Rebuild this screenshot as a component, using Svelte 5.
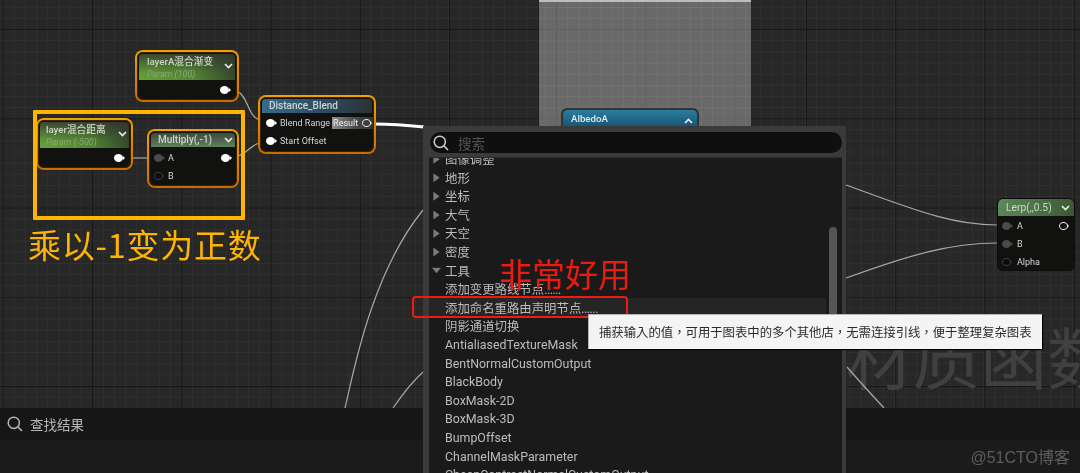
<script>
	const categories = [
		{ label: '图像调整', arrow: 'right' },
		{ label: '地形', arrow: 'right' },
		{ label: '坐标', arrow: 'right' },
		{ label: '大气', arrow: 'right' },
		{ label: '天空', arrow: 'right' },
		{ label: '密度', arrow: 'right' },
		{ label: '工具', arrow: 'down' }
	];
	const items = [
		{ label: '添加变更路线节点', dots: true },
		{ label: '添加命名重路由声明节点', dots: true, hover: true },
		{ label: '阴影通道切换' },
		{ label: 'AntialiasedTextureMask' },
		{ label: 'BentNormalCustomOutput' },
		{ label: 'BlackBody' },
		{ label: 'BoxMask-2D' },
		{ label: 'BoxMask-3D' },
		{ label: 'BumpOffset' },
		{ label: 'ChannelMaskParameter' },
		{ label: 'CheapContrastNormalCustomOutput' }
	];
</script>

{#snippet chevron(up)}
	<svg class="chevron" width="9" height="6" viewBox="0 0 9 6">
		<path d={up ? 'M1 5 L4.5 1.5 L8 5' : 'M1 1 L4.5 4.5 L8 1'} fill="none" stroke="#eee" stroke-width="1.6" />
	</svg>
{/snippet}

{#snippet lens(size, color)}
	<svg width={size} height={size} viewBox="0 0 16 16">
		<circle cx="6.8" cy="6.8" r="5.6" fill="none" stroke={color} stroke-width="1.5" />
		<path d="M10.8 10.8 L15 15" stroke={color} stroke-width="1.6" />
	</svg>
{/snippet}

<div class="stage">
	<div class="grid"></div>
	<div class="watermark-big">材质函数</div>
	<div class="preview"></div>

	<svg class="wires" width="1080" height="473" viewBox="0 0 1080 473">
		<g fill="none" stroke="#a8a8a8" stroke-width="1.2">
			<path d="M237 91 C248 96 248 116 259 120" />
			<path d="M133 158 L150 158" />
			<path d="M238 156 C246 154 250 146 259 143" />
			<path d="M846 185 C910 208 950 225 997 225" />
			<path d="M846 278 C910 255 950 243 997 243" />
			<path d="M345 408 C352 380 370 275 423 210" />
			<path d="M393 408 C402 395 412 382 423 372" />
			<path d="M847 367 C860 382 872 395 884 408" />
		</g>
		<path d="M375 124 C390 124 405 125 424 127" fill="none" stroke="#fff" stroke-width="3" />
	</svg>

	<div class="node selected layer-a">
		<div class="head green">
			<div class="title">layerA混合渐变</div>
			<div class="sub">Param (100)</div>
			{@render chevron(false)}
		</div>
		<div class="body"><div class="row end"><span class="pin on"></span></div></div>
	</div>

	<div class="node selected layer-d">
		<div class="head green">
			<div class="title">layer混合距离</div>
			<div class="sub">Param (-500)</div>
			{@render chevron(false)}
		</div>
		<div class="body"><div class="row end"><span class="pin on"></span></div></div>
	</div>

	<div class="node selected multiply">
		<div class="head slim">
			<div class="title">Multiply(,-1)</div>
			{@render chevron(false)}
		</div>
		<div class="body">
			<div class="row"><span class="pin dim"></span><span>A</span><span class="pin on push"></span></div>
			<div class="row"><span class="pin hollow"></span><span>B</span></div>
		</div>
	</div>

	<div class="node selected blend">
		<div class="head slim blue">
			<div class="title">Distance_Blend</div>
		</div>
		<div class="body">
			<div class="row">
				<span class="pin on"></span><span>Blend Range</span>
				<span class="result">Result<span class="pin ring"></span></span>
			</div>
			<div class="row"><span class="pin on"></span><span>Start Offset</span></div>
		</div>
	</div>

	<div class="node albedo">
		<div class="head teal">
			<div class="title">AlbedoA</div>
			<div class="sub">Param (1)</div>
			{@render chevron(true)}
		</div>
	</div>

	<div class="node lerp">
		<div class="head slim">
			<div class="title">Lerp(,,0.5)</div>
			{@render chevron(false)}
		</div>
		<div class="body">
			<div class="row"><span class="pin dim"></span><span>A</span><span class="pin ring push"></span></div>
			<div class="row"><span class="pin dim"></span><span>B</span></div>
			<div class="row"><span class="pin hollow"></span><span>Alpha</span></div>
		</div>
	</div>

	<div class="results">
		<div class="results-head">
			{@render lens(16, '#b5b5b5')}
			<span>查找结果</span>
		</div>
		<div class="credit">@51CTO博客</div>
	</div>

	<div class="menu">
		<div class="search">
			{@render lens(16, '#d0d0d0')}
			<span>搜索</span>
		</div>
		<div class="list">
			<div class="rows">
				{#each categories as c}
					<div class="item">
						<span class="arrow {c.arrow}"></span>
						<span>{c.label}</span>
					</div>
				{/each}
				{#each items as it}
					<div class="item" class:hover={it.hover}>
						<span>{it.label}{#if it.dots}<span class="dots">......</span>{/if}</span>
					</div>
				{/each}
			</div>
			<div class="scrollbar"></div>
		</div>
	</div>

	<div class="callout"></div>
	<div class="note yellow">乘以-1变为正数</div>
	<div class="note red">非常好用</div>
	<div class="outline"></div>
	<div class="tooltip">捕获输入的值，可用于图表中的多个其他店，无需连接引线，便于整理复杂图表</div>
</div>

<style>
	:global(body) {
		margin: 0;
		background: #262626;
	}
	.stage {
		position: relative;
		width: 1080px;
		height: 473px;
		overflow: hidden;
		background: #272727;
		font-family: Roboto, "Noto Sans CJK SC", sans-serif;
		color: #ddd;
		filter: blur(0.4px);
	}
	.grid {
		position: absolute;
		inset: 0;
		background-image:
			linear-gradient(to right, #171717 1px, transparent 1px),
			linear-gradient(to bottom, #171717 1px, transparent 1px),
			linear-gradient(to right, #303030 1px, transparent 1px),
			linear-gradient(to bottom, #303030 1px, transparent 1px);
		background-size: 89.25px 89.25px, 89.25px 89.25px, 11.156px 11.156px, 11.156px 11.156px;
		background-position: 2.75px 0, 0 29px, 2.75px 0, 0 29px;
	}
	.watermark-big {
		position: absolute;
		left: 846px;
		top: 312px;
		font-size: 67px;
		line-height: 86px;
		white-space: nowrap;
		color: #404040;
		font-family: "Noto Sans CJK SC", sans-serif;
	}
	.preview {
		position: absolute;
		left: 539px;
		top: 0;
		width: 212px;
		height: 130px;
		box-sizing: border-box;
		border-top: 2px solid #bdbdbd;
		background-color: #696969;
		background-image:
			linear-gradient(to right, #5f5f5f 1px, transparent 1px),
			linear-gradient(to bottom, #5f5f5f 1px, transparent 1px),
			linear-gradient(to right, #727272 1px, transparent 1px),
			linear-gradient(to bottom, #727272 1px, transparent 1px);
		background-size: 89.25px 89.25px, 89.25px 89.25px, 11.156px 11.156px, 11.156px 11.156px;
		background-position: 17px 0, 0 27px, 6px 0, 0 5px;
	}
	.wires {
		position: absolute;
		left: 0;
		top: 0;
	}

	.node {
		position: absolute;
		box-sizing: border-box;
		background: #11120f;
		border: 1px solid #0b0b0b;
		border-radius: 6px;
		font-size: 9px;
		color: #d6d6d6;
		overflow: hidden;
	}
	.node.selected {
		border: 2px solid transparent;
		border-radius: 8px;
		padding: 2px;
		background:
			linear-gradient(#11120f, #11120f) padding-box,
			linear-gradient(#f0a200, #c96c00) border-box;
		box-shadow: inset 0 0 0 1px #3a2400;
	}
	.layer-a { left: 135px; top: 50px; width: 104px; height: 52px; }
	.layer-d { left: 36px; top: 118px; width: 97px; height: 52px; }
	.multiply { left: 147px; top: 129px; width: 92px; height: 59px; }
	.blend { left: 258px; top: 95px; width: 118px; height: 59px; }
	.albedo { left: 561px; top: 108px; width: 138px; height: 40px; border-color: #333; border-width: 2px; }
	.lerp { left: 997px; top: 198px; width: 78px; height: 73px; }

	.head {
		position: relative;
		box-sizing: border-box;
		height: 26px;
		padding: 0 0 0 7px;
		border-radius: 4px 4px 0 0;
		line-height: 13px;
	}
	.head.green {
		padding-top: 1px;
		background:
			linear-gradient(180deg, rgba(48, 48, 48, 0.8) 0%, rgba(48, 48, 48, 0.1) 70%, transparent 100%),
			linear-gradient(90deg, #64a535 0%, #548a32 55%, #34492c 100%);
	}
	.layer-a .head { padding-left: 8px; }
	.layer-d .head { padding-left: 6px; }
	.head.slim {
		height: 14px;
	}
	.multiply .head.slim {
		background: linear-gradient(180deg, #3e4a3e, #5f7f5c);
	}
	.lerp .head.slim {
		height: 17px;
		background: linear-gradient(100deg, #5c8a58, #46683f 70%, #3b5636);
	}
	.head.blue {
		background: linear-gradient(90deg, #386a8c 0%, #2b4a5e 60%, #2c3236 100%);
	}
	.head.teal {
		height: 38px;
		padding-left: 8px;
		background: linear-gradient(180deg, #2a7ca0 0%, #15506d 50%, #0c2c3c 100%);
	}
	.title {
		font-size: 9.7px;
		font-weight: 500;
		color: #d0d4cc;
		white-space: nowrap;
	}
	.slim .title {
		line-height: 14px;
		font-size: 10px;
	}
	.lerp .title {
		font-weight: 400;
		font-size: 10.3px;
		line-height: 17px;
		padding-left: 1px;
	}
	.teal .title {
		color: #dfe9ee;
		line-height: 17px;
	}
	.sub {
		font-size: 9px;
		font-style: italic;
		color: #8aa678;
		line-height: 13px;
	}
	.teal .sub { color: #8fb4c6; }
	.chevron {
		position: absolute;
		right: 2px;
		top: 9px;
	}
	.slim .chevron { top: 4px; }
	.lerp .chevron { right: 4px; top: 6px; }
	.teal .chevron { top: 8px; right: 4px; }

	.body {
		padding-top: 1px;
	}
	.multiply .body { padding-top: 2px; }
	.row {
		display: flex;
		align-items: center;
		gap: 5px;
		height: 18px;
		padding: 0 5px 0 4px;
		white-space: nowrap;
	}
	.multiply .row { padding-left: 3px; }
	.lerp .row {
		gap: 6px;
		padding: 0 6px 0 4px;
	}
	.row.end { justify-content: flex-end; padding-right: 6px; }
	.push { margin-left: auto; }

	.pin {
		position: relative;
		display: inline-block;
		flex: none;
		box-sizing: border-box;
		width: 9px;
		height: 8px;
		border-radius: 50%;
	}
	.pin::after {
		content: "";
		position: absolute;
		left: 100%;
		top: 50%;
		margin-top: -2px;
		border-left: 2px solid currentColor;
		border-top: 2px solid transparent;
		border-bottom: 2px solid transparent;
	}
	.pin.on { background: #fff; color: #fff; }
	.pin.dim { background: #4a4a48; color: #4a4a48; }
	.pin.hollow { background: #0c0c0c; border: 1px solid #3f3f3d; color: #3f3f3d; }
	.pin.ring { background: transparent; border: 1.5px solid #e8e8e8; color: #e8e8e8; }

	.result {
		display: flex;
		align-items: center;
		gap: 4px;
		margin-left: -3px;
		height: 12px;
		padding: 0 2px 0 1px;
		background: linear-gradient(90deg, #8f8f8f, #4a4a4a 55%, #333);
		color: #eee;
	}

	.results {
		position: absolute;
		left: 0;
		right: 0;
		top: 408px;
		bottom: 0;
		background: #1b1b1b;
	}
	.results-head {
		display: flex;
		align-items: center;
		gap: 7px;
		box-sizing: border-box;
		height: 32px;
		padding-left: 7px;
		background: #161616;
		font-size: 13.5px;
		color: #b5b5b5;
	}
	.credit {
		position: absolute;
		right: 10px;
		top: 36px;
		font-size: 16px;
		color: #5e5e5e;
		font-family: "Liberation Sans", "Noto Sans CJK SC", sans-serif;
	}

	.menu {
		position: absolute;
		left: 423px;
		top: 126px;
		width: 423px;
		bottom: 0;
		box-sizing: border-box;
		padding: 6px 4px 0 6px;
		background: #3a3a3a;
		display: flex;
		flex-direction: column;
	}
	.search {
		display: flex;
		align-items: center;
		gap: 9px;
		flex: none;
		box-sizing: border-box;
		height: 21px;
		margin: 0 0 0 1px;
		padding-left: 3px;
		border-radius: 11px;
		background: #0f0f0f;
		font-size: 13.5px;
		color: #555;
	}
	.list {
		position: relative;
		flex: 1;
		margin-top: 4px;
		overflow: hidden;
		background: #1a1a1a;
		border-top: 1px solid #2b2b2b;
	}
	.rows {
		margin-top: -8px;
	}
	.item {
		display: flex;
		align-items: center;
		gap: 4px;
		box-sizing: border-box;
		height: 18.55px;
		width: 397px;
		padding-left: 16px;
		font-size: 12.4px;
		color: #bcbcbc;
		white-space: nowrap;
	}
	.item:has(.arrow) {
		padding-left: 3px;
	}
	.item.hover { background: #252525; }
	.dots { letter-spacing: -0.5px; }
	.arrow {
		flex: none;
		box-sizing: border-box;
		width: 9px;
		height: 9px;
		background: #7a7a7a;
	}
	.arrow.right { clip-path: polygon(15% 0, 85% 50%, 15% 100%); }
	.arrow.down { clip-path: polygon(0 20%, 100% 20%, 50% 80%); }
	.scrollbar {
		position: absolute;
		left: 400px;
		top: 69px;
		width: 8px;
		height: 120px;
		border-radius: 4px 4px 0 0;
		background: #555;
	}

	.callout {
		position: absolute;
		left: 33px;
		top: 110px;
		width: 212px;
		height: 110px;
		box-sizing: border-box;
		border: 4px solid #ffb400;
		border-radius: 1px;
	}
	.note {
		position: absolute;
		font-family: "Noto Sans CJK SC", sans-serif;
		font-size: 33px;
		line-height: 36px;
		white-space: nowrap;
	}
	.note.yellow { left: 28px; top: 226px; color: #ffb400; letter-spacing: 0.7px; }
	.note.red { left: 499px; top: 255px; color: #ee1a10; }
	.outline {
		position: absolute;
		left: 412px;
		top: 296px;
		width: 216px;
		height: 22px;
		box-sizing: border-box;
		border: 2.5px solid #f01a10;
		border-radius: 4px;
	}
	.tooltip {
		position: absolute;
		left: 588px;
		top: 314px;
		width: 454px;
		height: 35px;
		box-sizing: border-box;
		padding: 0 10px;
		display: flex;
		align-items: center;
		background: #f4f4f4;
		border-top: 1px solid #b5b5b5;
		border-left: 1px solid #b5b5b5;
		box-shadow: 1px 1px 1px #000;
		font-size: 12.37px;
		color: #2a2a2a;
		white-space: nowrap;
		font-family: "Noto Sans CJK TC", sans-serif;
	}
</style>
